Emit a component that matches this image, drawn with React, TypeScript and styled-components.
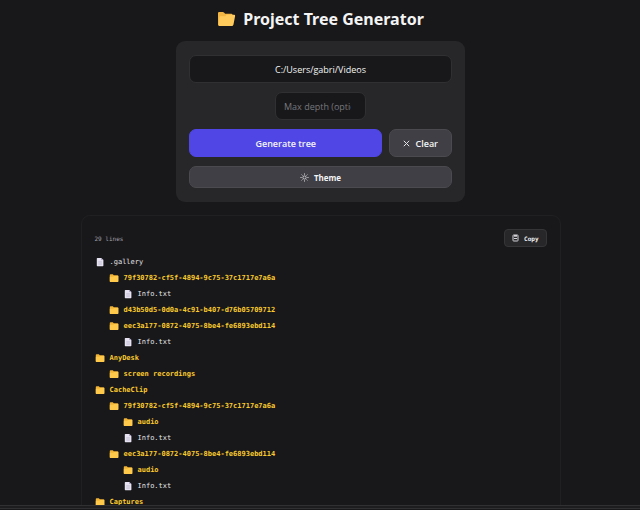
import React from "react";
import styled, { createGlobalStyle } from "styled-components";

const heading = '"Noto Sans", "Open Sans", sans-serif';
const sans = '"Open Sans", "Noto Sans", sans-serif';
const mono = '"DejaVu Sans Mono", "Liberation Mono", monospace';

const GlobalStyle = createGlobalStyle`
  *, *::before, *::after { box-sizing: border-box; }
  body { margin: 0; background: #18181a; color: #f4f4f5; font-family: ${sans}; }
`;

const Shell = styled.div`
  display: flex;
  flex-direction: column;
  height: 100vh;
`;

const Main = styled.main`
  flex: 1;
  min-height: 0;
  overflow: hidden;
  display: flex;
  flex-direction: column;
  align-items: center;
  padding: 6px 14px 0 15px;
`;

const StatusBar = styled.footer`
  flex: none;
  height: 4px;
  border-top: 1px solid #303032;
  border-bottom: 1px solid #303032;
  margin-bottom: 1px;
  background: #1d1d1f;
`;

const Title = styled.h1`
  display: flex;
  flex: none;
  align-items: center;
  gap: 7px;
  margin: 0;
  font-family: ${heading};
  font-size: 16px;
  line-height: 26px;
  font-weight: 700;
`;

const Card = styled.form`
  flex: none;
  display: flex;
  flex-direction: column;
  gap: 9px;
  width: 100%;
  max-width: 289px;
  margin-top: 9px;
  padding: 14px 13px;
  border-radius: 9px;
  background: #27272a;
`;

const TextField = styled.input<{ $compact?: boolean }>`
  align-self: center;
  width: ${(p) => (p.$compact ? "91px" : "100%")};
  height: 28px;
  padding: 0 ${(p) => (p.$compact ? "14px 0 8px" : "8px")};
  border: 1px solid #303033;
  border-radius: 7px;
  background: #18181a;
  color: #f4f4f5;
  font-family: ${sans};
  font-size: 9px;
  text-align: ${(p) => (p.$compact ? "left" : "center")};
  outline: none;
  &::placeholder { color: #77777c; }
`;

const ButtonRow = styled.div`
  display: flex;
  gap: 7px;
`;

const Button = styled.button<{ $primary?: boolean; $slim?: boolean }>`
  display: flex;
  align-items: center;
  justify-content: center;
  gap: 5px;
  flex: ${(p) => (p.$primary ? "1" : "none")};
  height: ${(p) => (p.$slim ? "22px" : "28px")};
  padding: 0 13px;
  border: 1px solid ${(p) => (p.$primary ? "#4f46e5" : "#4a4a4f")};
  border-radius: 7px;
  background: ${(p) => (p.$primary ? "#4f46e5" : "#3f3f45")};
  color: #f4f4f5;
  font-family: ${sans};
  font-size: ${(p) => (p.$slim ? "8px" : "9px")};
  font-weight: ${(p) => (p.$slim ? 700 : 600)};
  cursor: pointer;
`;

const Output = styled.section`
  flex: none;
  width: 100%;
  max-width: 480px;
  margin-top: 13px;
  padding: 13px;
  border: 1px solid #202023;
  border-radius: 9px;
  font-family: ${mono};
`;

const OutputHeader = styled.header`
  display: flex;
  align-items: center;
  justify-content: space-between;
  margin-bottom: 7px;
  color: #a1a1aa;
  font-size: 6px;
`;

const CopyButton = styled.button`
  display: flex;
  align-items: center;
  gap: 5px;
  height: 18px;
  padding: 0 7px;
  border: 1px solid #353538;
  border-radius: 4px;
  background: #27272a;
  color: #f4f4f5;
  font-family: ${mono};
  font-size: 6px;
  font-weight: 700;
  cursor: pointer;
`;

const TreeList = styled.ul`
  margin: 0;
  padding: 0;
  list-style: none;
`;

const TreeRow = styled.li<{ $depth: number; $folder: boolean }>`
  display: flex;
  align-items: center;
  gap: 5px;
  height: 16px;
  padding-left: ${(p) => p.$depth * 14}px;
  font-size: 7px;
  line-height: 8px;
  font-weight: ${(p) => (p.$folder ? 700 : 400)};
  color: ${(p) => (p.$folder ? "#fbcb2d" : "#e4e4e7")};
`;

const FolderIcon = () => (
  <svg width="10" height="10" viewBox="0 0 10 10" aria-hidden="true">
    <path d="M.8 2Q.8 1.200 1.600 1.200h2.200l1 1.100h3.700q.8 0 .8.8V8.300q0 .8-.8.8H1.600q-.8 0-.8-.8Z" fill="#f2b437" />
    <path d="M.8 3.700h3.400l1-.8h4.100v5.400q0 .8-.8.8H1.600q-.8 0-.8-.8Z" fill="#ffc94b" />
  </svg>
);

const FileIcon = () => (
  <svg width="10" height="10" viewBox="0 0 10 10" aria-hidden="true">
    <path d="M1.8 1.5q0-.6.6-.6h3.8l2.2 2.2v5.5q0 .6-.6.6H2.4q-.6 0-.6-.6Z" fill="#e6e2f1" />
    <path d="M6.2.9v2.2h2.2Z" fill="#a9a2bd" />
    <path d="M3.3 4.7h3.6M3.3 6h3.6M3.3 7.3h3.6" stroke="#b3acc6" strokeWidth=".5" />
  </svg>
);

const OpenFolderIcon = () => (
  <svg width="19" height="18" viewBox="0 0 19 18" aria-hidden="true">
    <path d="M1 3Q1 1.900 2.100 1.900h3.700q.7 0 1.200.6l1.100 1.300h6.200q1.200 0 1.200 1.200v10.700H2.200Q1 15.700 1 14.500Z" fill="#f2b645" />
    <path d="M1.700 15.200 2.500 7.200q.1-.9 1-.9h4q.6 0 1-.4l.8-.8q.4-.4 1-.4h6.800q1.200 0 1 1.200l-1.600 8.700q-.3 1.400-1.600 1.400H2.500q-.9 0-.8-.8Z" fill="#ffca5c" />
  </svg>
);

const CrossIcon = () => (
  <svg width="7" height="7" viewBox="0 0 7 7" aria-hidden="true">
    <path d="m.8.8 5.400 5.400M6.200.8.8 6.200" stroke="#e4e4e7" strokeWidth="1" />
  </svg>
);

const SunIcon = () => (
  <svg width="9" height="9" viewBox="0 0 9 9" fill="none" stroke="#e4e4e7" strokeWidth=".8" aria-hidden="true">
    <circle cx="4.500" cy="4.500" r="1.600" />
    <path d="M4.500.4v1.300M4.500 7.300v1.300M.4 4.500h1.300M7.300 4.500h1.300M1.600 1.600l.9.9M6.500 6.500l.9.9M7.400 1.600l-.9.9M2.500 6.500l-.9.9" />
  </svg>
);

const ClipboardIcon = () => (
  <svg width="7" height="8" viewBox="0 0 7 8" fill="none" aria-hidden="true">
    <rect x="1" y="1" width="5" height="6" rx=".6" stroke="#d4d4d8" strokeWidth="1" />
    <path d="M2 1h3v1.700H2Z" fill="#d4d4d8" />
    <path d="M2 4.500h3" stroke="#d4d4d8" strokeWidth="1" />
  </svg>
);

type Entry = { name: string; depth: number; folder?: boolean };

const entries: Entry[] = [
  { name: ".gallery", depth: 0 },
  { name: "79f30782-cf5f-4894-9c75-37c1717e7a6a", depth: 1, folder: true },
  { name: "Info.txt", depth: 2 },
  { name: "d43b50d5-0d0a-4c91-b407-d76b05709712", depth: 1, folder: true },
  { name: "eec3a177-0872-4075-8be4-fe6893ebd114", depth: 1, folder: true },
  { name: "Info.txt", depth: 2 },
  { name: "AnyDesk", depth: 0, folder: true },
  { name: "screen recordings", depth: 1, folder: true },
  { name: "CacheClip", depth: 0, folder: true },
  { name: "79f30782-cf5f-4894-9c75-37c1717e7a6a", depth: 1, folder: true },
  { name: "audio", depth: 2, folder: true },
  { name: "Info.txt", depth: 2 },
  { name: "eec3a177-0872-4075-8be4-fe6893ebd114", depth: 1, folder: true },
  { name: "audio", depth: 2, folder: true },
  { name: "Info.txt", depth: 2 },
  { name: "Captures", depth: 0, folder: true },
];

export default function App() {
  return (
    <Shell>
      <GlobalStyle />
      <Main>
        <Title>
          <OpenFolderIcon />
          Project Tree Generator
        </Title>
        <Card onSubmit={(e) => e.preventDefault()}>
          <TextField aria-label="Project path" defaultValue="C:/Users/gabri/Videos" />
          <TextField $compact aria-label="Max depth" placeholder="Max depth (optional)" />
          <ButtonRow>
            <Button $primary type="submit">Generate tree</Button>
            <Button type="button">
              <CrossIcon />
              Clear
            </Button>
          </ButtonRow>
          <Button $slim type="button">
            <SunIcon />
            Theme
          </Button>
        </Card>
        <Output>
          <OutputHeader>
            <span>29 lines</span>
            <CopyButton type="button">
              <ClipboardIcon />
              Copy
            </CopyButton>
          </OutputHeader>
          <TreeList>
            {entries.map((entry, i) => (
              <TreeRow key={i} $depth={entry.depth} $folder={!!entry.folder}>
                {entry.folder ? <FolderIcon /> : <FileIcon />}
                {entry.name}
              </TreeRow>
            ))}
          </TreeList>
        </Output>
      </Main>
      <StatusBar />
    </Shell>
  );
}
